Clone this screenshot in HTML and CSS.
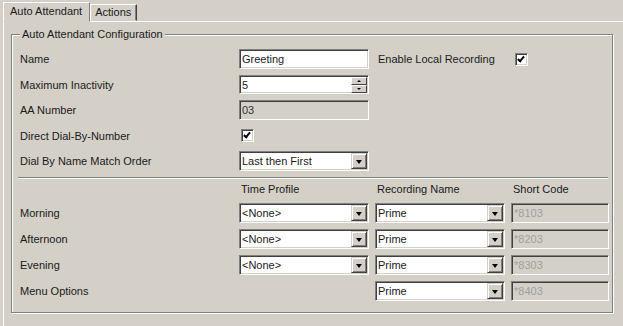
FILE: index.html
```html
<!DOCTYPE html>
<html lang="en">
<head>
  <meta charset="UTF-8">
  <title>Auto Attendant</title>
  <link rel="stylesheet" href="styles.css">
</head>
<body>
  <div class="tabs">
    <div class="tab active">Auto Attendant</div>
    <div class="tab">Actions</div>
  </div>

  <div class="panel">
    <fieldset class="group">
      <legend>Auto Attendant Configuration</legend>

      <div class="form">
        <div class="lbl">Name</div>
        <div class="field">Greeting</div>
        <div class="lbl right">Enable Local Recording</div>
        <div class="cell"><span class="check on"></span></div>

        <div class="lbl">Maximum Inactivity</div>
        <div class="field spin">5
          <span class="spinbtns"><span class="sb up"></span><span class="sb down"></span></span>
        </div>
        <div></div><div></div>

        <div class="lbl">AA Number</div>
        <div class="field off dark">03</div>
        <div></div><div></div>

        <div class="lbl">Direct Dial-By-Number</div>
        <div class="cell"><span class="check on"></span></div>
        <div></div><div></div>

        <div class="lbl">Dial By Name Match Order</div>
        <div class="field combo">Last then First<span class="drop"></span></div>
        <div></div><div></div>
      </div>

      <div class="sep"></div>

      <div class="form lower">
        <div></div>
        <div class="head">Time Profile</div>
        <div class="head">Recording Name</div>
        <div class="head">Short Code</div>

        <div class="lbl">Morning</div>
        <div class="field combo">&lt;None&gt;<span class="drop"></span></div>
        <div class="field combo">Prime<span class="drop"></span></div>
        <div class="field off">*8103</div>

        <div class="lbl">Afternoon</div>
        <div class="field combo">&lt;None&gt;<span class="drop"></span></div>
        <div class="field combo">Prime<span class="drop"></span></div>
        <div class="field off">*8203</div>

        <div class="lbl">Evening</div>
        <div class="field combo">&lt;None&gt;<span class="drop"></span></div>
        <div class="field combo">Prime<span class="drop"></span></div>
        <div class="field off">*8303</div>

        <div class="lbl">Menu Options</div>
        <div></div>
        <div class="field combo">Prime<span class="drop"></span></div>
        <div class="field off">*8403</div>
      </div>
    </fieldset>
  </div>
</body>
</html>
```

FILE: styles.css
```css
body {
  margin: 0;
  background: #d4d0c8;
  font-family: "Liberation Sans", Arial, sans-serif;
  font-size: 11px;
  color: #1a1a1a;
  height: 326px;
  overflow: hidden;
}

.tabs {
  display: flex;
  align-items: flex-end;
  height: 21px;
  padding-left: 3px;
  position: relative;
  z-index: 1;
}

.tab {
  box-sizing: border-box;
  height: 17px;
  line-height: 15px;
  padding: 0 5px 0 4px;
  border: 1px solid;
  border-color: #fff #404040 transparent #fff;
  box-shadow: inset -1px 0 #808080;
}

.tab.active {
  height: 20px;
  line-height: 17px;
  margin-bottom: -1px;
  padding: 0 7px 0 6px;
  background: #d4d0c8;
  box-shadow: none;
  border-right-color: #808080;
}

.panel {
  margin-left: 3px;
  border-top: 1px solid #fff;
  border-left: 1px solid #fff;
  height: 320px;
  padding: 6px 0 0 7px;
  box-sizing: border-box;
}

.group {
  margin: 0;
  width: 602px;
  height: 285px;
  box-sizing: border-box;
  border: 1px solid #808080;
  box-shadow: inset 1px 1px #fff, 1px 1px #fff;
  padding: 8px 0 0 8px;
  min-width: 0;
}

.group legend {
  padding: 0 2px;
  line-height: 13px;
  background: #d4d0c8;
}

.form {
  display: grid;
  grid-template-columns: 213px 130px 130px 98px;
  grid-auto-rows: 20px;
  column-gap: 6px;
  row-gap: 5.5px;
  align-items: center;
}

.form.lower {
  grid-template-rows: 14px;
  grid-auto-rows: 20px;
  row-gap: 6px;
}

.lbl.right {
  padding-left: 3px;
}

.head {
  padding-left: 2px;
  align-self: start;
}

.sep {
  margin: 6px 0 4px -2px;
  width: 590px;
  height: 1px;
  background: #808080;
  border-bottom: 1px solid #fff;
}

.field {
  box-sizing: border-box;
  height: 20px;
  background: #fff;
  border: 1px solid;
  border-color: #808080 #fff #fff #808080;
  box-shadow: inset 1px 1px #404040, inset -1px -1px #d4d0c8;
  display: flex;
  align-items: center;
  padding-left: 2px;
  white-space: nowrap;
  overflow: hidden;
}

.field.off {
  background: #d4d0c8;
  color: #a0a0a0;
}

.field.off.dark {
  color: #333;
}

.field.spin {
  height: 19px;
}

.combo .drop,
.spinbtns {
  margin-left: auto;
  margin-right: 1px;
}

.drop {
  width: 16px;
  height: 16px;
  box-sizing: border-box;
  background: #d4d0c8;
  border: 1px solid;
  border-color: #d4d0c8 #404040 #404040 #d4d0c8;
  box-shadow: inset 1px 1px #fff, inset -1px -1px #808080;
  position: relative;
}

.drop::after {
  content: "";
  position: absolute;
  left: 4px;
  top: 6px;
  border-left: 3.5px solid transparent;
  border-right: 3.5px solid transparent;
  border-top: 4px solid #000;
}

.spinbtns {
  display: flex;
  flex-direction: column;
  width: 16px;
}

.sb {
  height: 8px;
  box-sizing: border-box;
  background: #d4d0c8;
  border: 1px solid;
  border-color: #fff #404040 #404040 #fff;
  position: relative;
}

.sb::after {
  content: "";
  position: absolute;
  left: 5px;
  top: 2px;
  border-left: 2px solid transparent;
  border-right: 2px solid transparent;
}

.sb.up::after {
  border-bottom: 2px solid #000;
}

.sb.down::after {
  border-top: 2px solid #000;
}

.cell {
  display: flex;
  align-items: center;
  padding-left: 2px;
}

.form .cell:nth-child(4) {
  padding-left: 4px;
}

.check {
  width: 13px;
  height: 13px;
  box-sizing: border-box;
  background: #fff;
  border: 1px solid;
  border-color: #808080 #fff #fff #808080;
  box-shadow: inset 1px 1px #404040, inset -1px -1px #d4d0c8;
  position: relative;
}

.check.on::after {
  content: "";
  position: absolute;
  left: 3px;
  top: 1px;
  width: 2px;
  height: 5px;
  border: solid #000;
  border-width: 0 2px 2px 0;
  transform: rotate(40deg);
}
```
